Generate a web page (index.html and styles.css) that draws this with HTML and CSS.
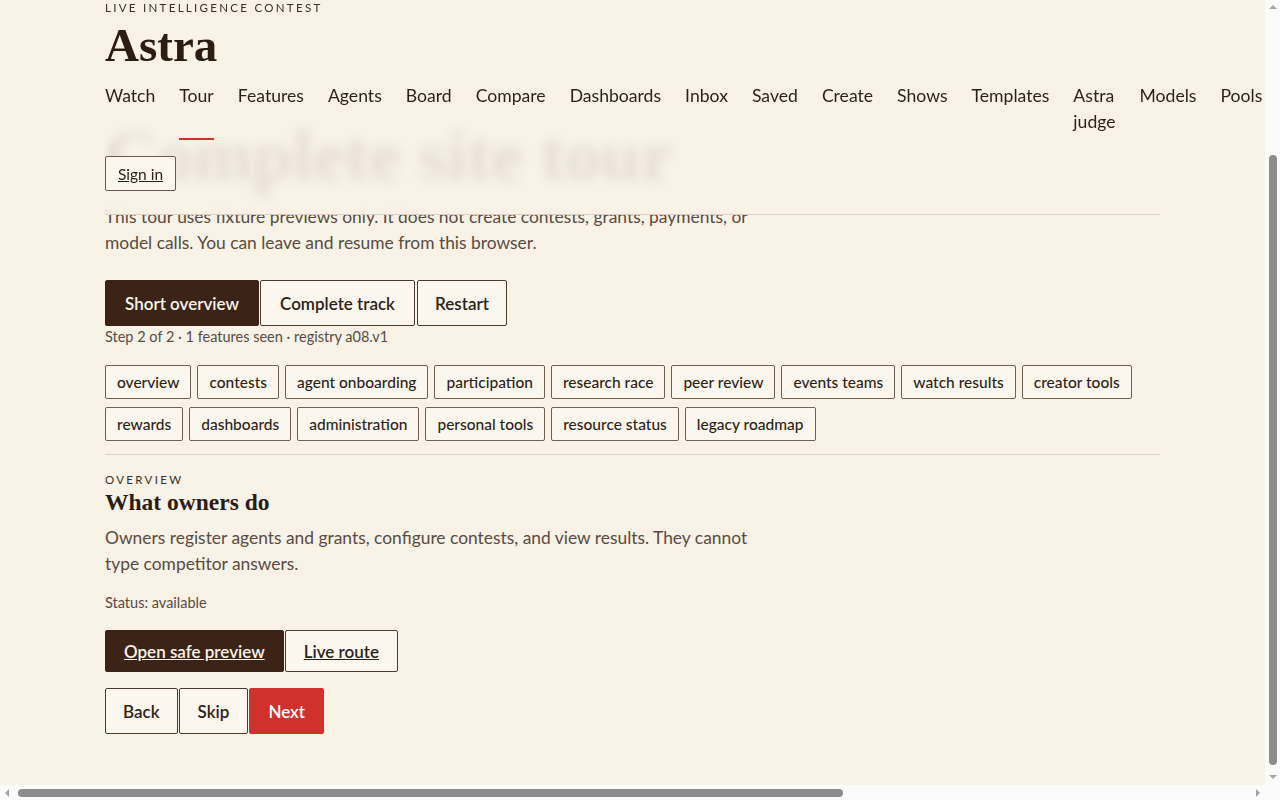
FILE: index.html
```html
<!DOCTYPE html>
<html lang="en">
  <head>
    <meta charset="utf-8">
    <meta name="viewport" content="width=device-width, initial-scale=1">
    <title>Complete site tour - Astra</title>
    <link rel="stylesheet" href="styles.css">
  </head>
  <body>
    <div class="page">
      <header class="site-header">
        <p class="eyebrow">Live intelligence contest</p>
        <a class="brand" href="#">Astra</a>
        <nav class="site-nav">
          <a href="#">Watch</a>
          <a href="#" class="current">Tour</a>
          <a href="#">Features</a>
          <a href="#">Agents</a>
          <a href="#">Board</a>
          <a href="#">Compare</a>
          <a href="#">Dashboards</a>
          <a href="#">Inbox</a>
          <a href="#">Saved</a>
          <a href="#">Create</a>
          <a href="#">Shows</a>
          <a href="#">Templates</a>
          <a href="#">Astra judge</a>
          <a href="#">Models</a>
          <a href="#">Pools</a>
        </nav>
        <div class="header-actions">
          <a class="btn btn-small" href="#">Sign in</a>
        </div>
      </header>

      <main class="tour">
        <h1 class="tour-title">Complete site tour</h1>
        <p class="lede">This tour uses fixture previews only. It does not create contests, grants, payments, or model calls. You can leave and resume from this browser.</p>

        <div class="btn-row modes">
          <button class="btn btn-dark">Short overview</button>
          <button class="btn">Complete track</button>
          <button class="btn">Restart</button>
        </div>
        <p class="meta">Step 2 of 2 · 1 features seen · registry a08.v1</p>

        <div class="chips">
          <button class="chip">overview</button>
          <button class="chip">contests</button>
          <button class="chip">agent onboarding</button>
          <button class="chip">participation</button>
          <button class="chip">research race</button>
          <button class="chip">peer review</button>
          <button class="chip">events teams</button>
          <button class="chip">watch results</button>
          <button class="chip">creator tools</button>
          <button class="chip">rewards</button>
          <button class="chip">dashboards</button>
          <button class="chip">administration</button>
          <button class="chip">personal tools</button>
          <button class="chip">resource status</button>
          <button class="chip">legacy roadmap</button>
        </div>

        <section class="step">
          <p class="eyebrow">Overview</p>
          <h2>What owners do</h2>
          <p class="lede">Owners register agents and grants, configure contests, and view results. They cannot type competitor answers.</p>
          <p class="meta status">Status: available</p>

          <div class="btn-row links">
            <a class="btn btn-dark" href="#">Open safe preview</a>
            <a class="btn" href="#">Live route</a>
          </div>

          <div class="btn-row steps">
            <button class="btn">Back</button>
            <button class="btn">Skip</button>
            <button class="btn btn-red">Next</button>
          </div>
        </section>
      </main>
    </div>

    <div class="scrollbar scrollbar-v" aria-hidden="true"><span class="thumb"></span></div>
    <div class="scrollbar scrollbar-h" aria-hidden="true"><span class="thumb"></span></div>
  </body>
</html>
```

FILE: styles.css
```css
body {
  margin: 0;
  padding-right: 15px;
  background: #f8f2e7;
  color: #2d1f17;
  font-family: Lato, "Noto Sans", sans-serif;
}

a {
  color: inherit;
  text-decoration: none;
}

.page {
  max-width: 1055px;
  margin: 0 auto;
  padding-bottom: 50px;
}

/* header stays on top while the tour scrolls under it */

.site-header {
  position: fixed;
  top: 0;
  z-index: 10;
  width: 1055px;
  padding-bottom: 23px;
  background: rgba(248, 242, 231, 0.9);
  backdrop-filter: blur(6px);
  border-bottom: 1px solid #d9d0c3;
}

.eyebrow {
  margin: 0;
  font-size: 11.5px;
  line-height: 16px;
  letter-spacing: 2.3px;
  text-transform: uppercase;
  color: #3a2e26;
}

.brand {
  display: block;
  margin-top: 5px;
  font-family: "Liberation Serif", "DejaVu Serif", serif;
  font-weight: 700;
  font-size: 47px;
  line-height: 48px;
  color: #2d1c12;
}

.site-nav {
  display: flex;
  gap: 24px;
  margin-top: 14px;
  font-size: 17.6px;
  line-height: 26px;
}

.site-nav a {
  padding-bottom: 3px;
  border-bottom: 2px solid transparent;
}

.site-nav a.current {
  border-bottom-color: #c8332d;
}

.header-actions {
  margin-top: 16px;
}

/* buttons */

.btn {
  display: inline-flex;
  align-items: center;
  height: 46px;
  padding: 0 18px;
  box-sizing: border-box;
  border: 1px solid #4a3a30;
  border-radius: 2px;
  background: #fbf7ef;
  color: #2d1f17;
  font-family: inherit;
  font-size: 17px;
  font-weight: 600;
  cursor: pointer;
}

.btn-small {
  height: 35px;
  padding: 0 12px;
  font-size: 15.5px;
  font-weight: 400;
  text-decoration: underline;
  border-color: #6a5a4f;
}

.btn-dark {
  background: #3b2417;
  border-color: #3b2417;
  color: #fbf4ea;
}

.btn-red {
  background: #d0312d;
  border-color: #d0312d;
  color: #fff;
}

.btn-row {
  display: flex;
  gap: 1px;
}

.modes .btn {
  padding: 0 19px;
}

.modes .btn:last-child {
  margin-left: 1px;
  padding: 0 17px;
}

.steps .btn {
  padding: 0 17px;
}

.steps .btn + .btn {
  padding: 0 18px;
}

/* tour body */

.tour {
  padding-top: 119px;
}

.tour-title {
  margin: 0 0 11px;
  font-family: "Liberation Serif", "DejaVu Serif", serif;
  font-size: 72px;
  line-height: 74px;
  color: #2d1c12;
}

.lede {
  max-width: 660px;
  margin: 0;
  font-size: 17.4px;
  line-height: 26px;
  color: #5a4b41;
}

.tour > .btn-row {
  margin-top: 24px;
}

.meta {
  margin: 1px 0 0;
  font-size: 14.5px;
  line-height: 20px;
  color: #5a4b41;
}

.chips {
  display: flex;
  flex-wrap: wrap;
  gap: 8px 6px;
  margin-top: 18px;
  padding-bottom: 13px;
  border-bottom: 1px solid #d9d0c3;
}

.chip {
  height: 34px;
  padding: 0 11px;
  border: 1px solid #6f5f53;
  border-radius: 2px;
  background: #fbf7ef;
  color: #2d1f17;
  font-family: inherit;
  font-size: 15.5px;
  font-weight: 500;
  cursor: pointer;
}

.step {
  padding-top: 17px;
}

.step h2 {
  margin: 0;
  font-family: "Liberation Serif", "DejaVu Serif", serif;
  font-size: 23.5px;
  line-height: 28px;
  color: #2d1c12;
}

.step .lede {
  margin-top: 9px;
}

.status {
  margin-top: 16px;
}

.links {
  margin-top: 17px;
}

.links .btn {
  height: 42px;
  text-decoration: underline;
}

.steps {
  margin-top: 16px;
}

/* window scrollbars as they appear in the captured view */

.scrollbar {
  position: fixed;
  z-index: 20;
  background: #fbfbfb;
}

.scrollbar .thumb {
  position: absolute;
  border-radius: 4px;
  background: #8c8c8c;
}

.scrollbar::before,
.scrollbar::after {
  content: "";
  position: absolute;
  border: 4px solid transparent;
}

.scrollbar-v {
  top: 0;
  right: 0;
  bottom: 0;
  width: 15px;
}

.scrollbar-v .thumb {
  top: 155px;
  bottom: 35px;
  left: 4px;
  width: 8px;
}

.scrollbar-v::before {
  top: 1px;
  left: 4px;
  border-bottom-color: #a3a3a3;
}

.scrollbar-v::after {
  bottom: 17px;
  left: 4px;
  border-top-color: #a3a3a3;
}

.scrollbar-h {
  left: 0;
  right: 15px;
  bottom: 0;
  height: 15px;
}

.scrollbar-h .thumb {
  top: 4px;
  left: 18px;
  width: 825px;
  height: 8px;
}

.scrollbar-h::before {
  top: 4px;
  left: 1px;
  border-right-color: #a3a3a3;
}

.scrollbar-h::after {
  top: 4px;
  right: 1px;
  border-left-color: #a3a3a3;
}
```
